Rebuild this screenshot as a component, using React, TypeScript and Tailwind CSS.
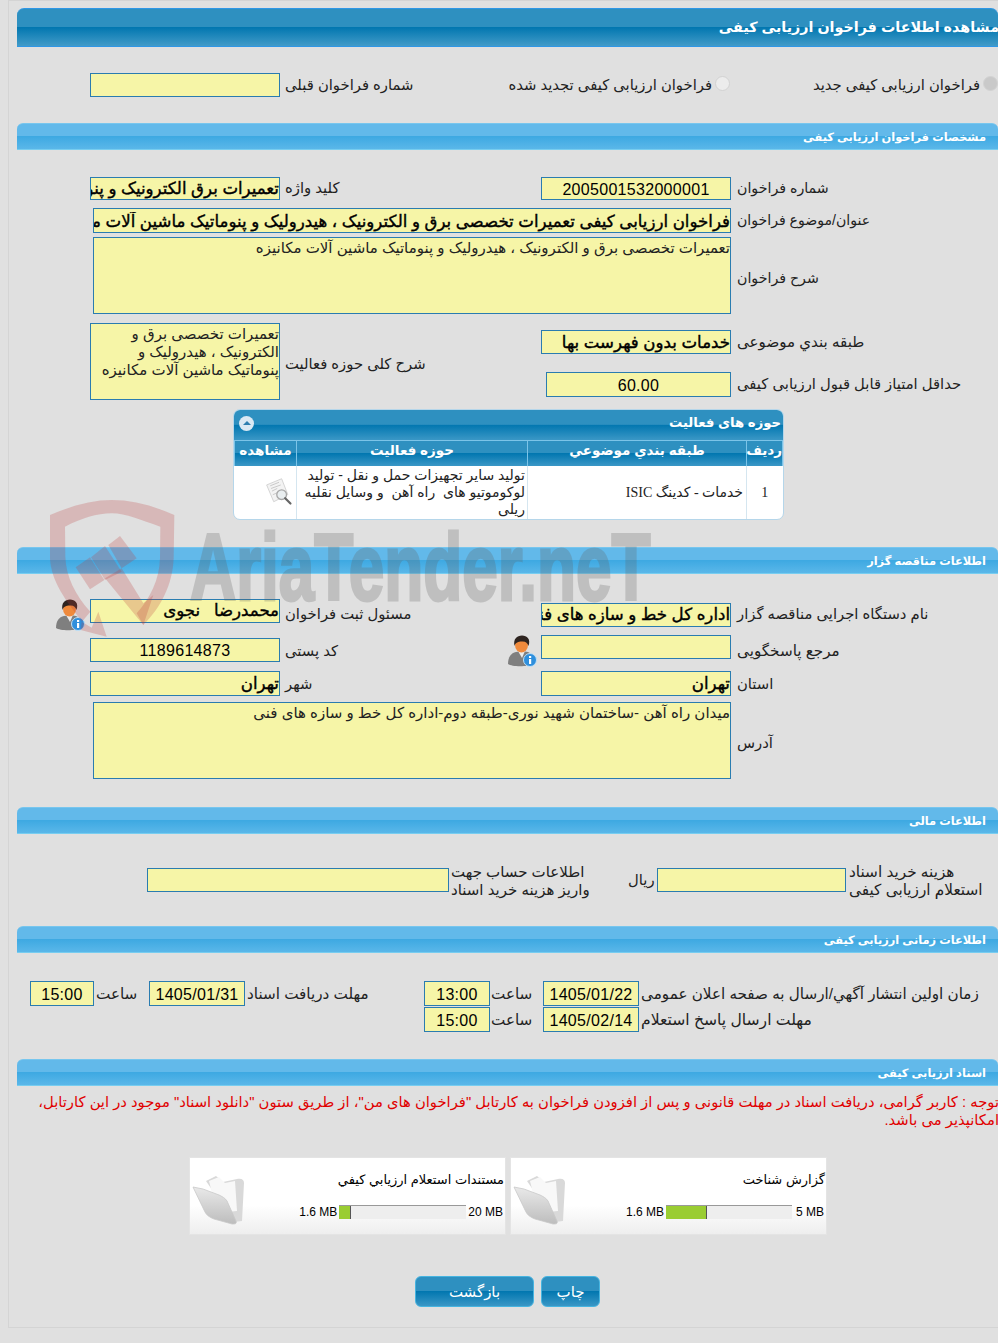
import React from 'react';

const font = "[font-family:'Liberation_Sans','DejaVu_Sans',sans-serif]";
const darkBar = 'bg-[linear-gradient(#2e90c0_0,#2e90c0_48%,#0277b0_50%,#3a97c6_100%)]';

const Section = ({ title }: { title: string }) => (
  <div dir="rtl" className="h-[27px] rounded-t-[6px] border-y border-t-[#77c6ee] border-b-[#77cdf0] bg-[linear-gradient(#62b9ea_0,#62b9ea_48%,#3ea9e2_50%,#5ab7e9_100%)] pr-[12px] text-[11.400px] font-bold leading-[26px] text-white">
    {title}
  </div>
);

const Field = ({ value = '', className = '', center = false, bold = false }: { value?: string; className?: string; center?: boolean; bold?: boolean }) => (
  <input
    readOnly
    dir="rtl"
    value={value}
    className={`block border border-[#2a7cb0] bg-[#f6f5a7] px-0 text-black outline-none ${center ? 'pt-[3px] text-center text-[16px] tracking-[0.3px]' : 'text-right'} ${bold ? 'pt-[2px] text-[16.600px] [-webkit-text-stroke:0.4px_black]' : ''} ${className}`}
  />
);

const Area = ({ value, className = '' }: { value: string; className?: string }) => (
  <textarea
    readOnly
    dir="rtl"
    value={value}
    className={`block resize-none overflow-hidden border border-[#2a7cb0] bg-[#f6f5a7] pt-[1px] text-[15px] leading-[18px] text-[#222] outline-none ${className}`}
  />
);

const Label = ({ children, className = '', size = 'text-[14.800px]' }: { children: React.ReactNode; className?: string; size?: string }) => (
  <div dir="rtl" className={`whitespace-nowrap text-left text-[#222] ${size} ${className}`}>
    {children}
  </div>
);

const Radio = ({ checked = false }: { checked?: boolean }) => (
  <span className={`-mt-[5px] block h-[15px] w-[15px] rounded-full border border-[#d2d2d2] ${checked ? 'bg-[#c9c9c9]' : 'bg-[#ececec]'}`} />
);

const PersonIcon = ({ className = '' }: { className?: string }) => (
  <svg viewBox="0 0 30 32" className={className}>
    <path d="M1 29c0-7 3-11 8-12l6-1 6 1c3 1 4 3 4 6v6c-4 3-20 3-24 0z" fill="#7f7f7f" />
    <path d="M11 16l4 7 3-7-3-2z" fill="#ececec" />
    <ellipse cx="14.500" cy="10" rx="6.500" ry="7.500" fill="#f08a3c" />
    <path d="M7.500 11C6 4 10 0.500 15 0.500s9 3.500 6.500 10.500c-1-3-3-5-7-4.500-3 0-6 1-7 4.500z" fill="#2e2420" />
    <circle cx="23" cy="25" r="6.500" fill="#2f8fdc" stroke="#bfe0f7" strokeWidth="1" />
    <rect x="22" y="24" width="2.200" height="5" fill="#fff" />
    <rect x="22" y="21" width="2.200" height="2" fill="#fff" />
  </svg>
);

const ViewIcon = () => (
  <svg viewBox="0 0 32 34" className="h-[30px] w-[30px]">
    <path d="M2 9l17-7 7 18-16 8z" fill="#f3f3f3" stroke="#cfcfcf" />
    <path d="M6 10l10-4M7 13l11-4M8 16l6-3M9 20l5-2" stroke="#c4c4c4" />
    <circle cx="19" cy="20" r="5.500" fill="#e9eef0" stroke="#a8a8a8" strokeWidth="1.500" />
    <path d="M23 24l6 6" stroke="#666" strokeWidth="2.500" strokeLinecap="round" />
  </svg>
);

const FolderIcon = () => (
  <svg viewBox="0 0 56 52" className="h-[52px] w-[56px] shrink-0">
    <defs>
      <linearGradient id="folderFront" x1="0" y1="0" x2="0" y2="1">
        <stop offset="0" stopColor="#e9e9e9" />
        <stop offset="1" stopColor="#bdbdbd" />
      </linearGradient>
    </defs>
    <path d="M14 8l10-5 7 6 14-3c5-1 7 1 7 4l-2 38-8 1z" fill="#d9d9d9" />
    <path d="M17 8l10-4 6 6 10-2 2 30-20 2z" fill="#f8f8f8" />
    <path d="M1 14l10 2 16 6c4 2 6 3 8 6l9 20c1 3-1 3-4 3L22 46c-5-2-8-4-10-9z" fill="url(#folderFront)" stroke="#c9c9c9" strokeWidth="0.800" />
  </svg>
);

const FileCard = ({ title, total, used, barWidth, fill, totalGap }: { title: string; total: string; used: string; barWidth: string; fill: string; totalGap: string }) => (
  <div className="flex h-[78px] w-[317px] border border-[#e4e4e4] bg-[linear-gradient(#ffffff_0,#ffffff_62%,#eeeeee_100%)]">
    <div className="mt-[15px] ml-[2px]">
      <FolderIcon />
    </div>
    <div className="flex flex-1 flex-col items-end pr-[1px]">
      <div dir="rtl" className="mt-[14px] text-[13px] leading-[16px] text-black">{title}</div>
      <div className="mt-[17px] flex items-center text-[12px] leading-[14px] text-black">
        <span className="mr-[2px]">{used}</span>
        <div className={`h-[14px] border-t border-[#999] bg-[#eeeeee] ${barWidth}`}>
          <div className={`h-[13px] border-r border-[#555] bg-[#9acd32] ${fill}`} />
        </div>
        <span className={`mr-[1px] ${totalGap}`}>{total}</span>
      </div>
    </div>
  </div>
);

const Watermark = () => (
  <div className="pointer-events-none absolute left-0 top-0 z-10 h-[660px] w-[700px]">
    <svg viewBox="0 0 450 450" className="absolute left-[40px] top-[495px] h-[150px] w-[150px]">
      <g fill="rgba(190,60,60,0.24)">
        <path d="M30 60C100 30 160 15 215 15c60 0 120 15 188 45l-2 130c-3 80-40 150-91 200l-20-35c40-45 68-100 70-165l1-95C300 75 260 55 215 55c-45 0-90 15-140 40l1 90c2 60 30 115 75 165l-25 30C80 320 33 260 30 190z" />
        <path d="M195 250l50-30 65 105 30-25-30 90z" />
        <path d="M107 217l43-30 43 68-43 28z" />
        <path d="M153 187l42-34 50 77-50 25z" />
        <path d="M205 150l35-27 50 67-45 30z" />
        <path d="M125 380l30 18 20-48 25 75-78-20z" />
      </g>
    </svg>
    <div className="absolute left-[190px] top-[513px] origin-left whitespace-nowrap text-[94px] font-bold leading-[110px] text-[#606060] opacity-25 [-webkit-text-stroke:3px_#606060] [font-family:'Liberation_Sans',sans-serif] [transform:scaleX(0.68)]">
      AriaTender.neT
    </div>
  </div>
);

export default function App() {
  return (
    <div className={`relative h-[1343px] w-[998px] overflow-hidden bg-[#e0e0e0] ${font}`}>
      <div className="ml-[8px] h-[1328px] border-b border-l border-t border-[#d4d4d4] pl-[8px] pt-[7px]">
        {/* main title */}
        <div dir="rtl" className="h-[39px] overflow-hidden rounded-t-[7px] border-y border-[#2f97e6] bg-[linear-gradient(#2e90c0_0,#2e90c0_48%,#0277b0_50%,#429bc8_100%)] text-[14.300px] font-bold leading-[37px] text-white">
          <span className="mr-[-1px] inline-block">مشاهده اطلاعات فراخوان ارزیابی کیفی</span>
        </div>

        <div className="mt-[26px] grid h-[24px] grid-cols-[263px_450px_1fr] items-center">
          <Field className="ml-[73px] h-[24px] w-[190px]" />
          <div className="flex items-center justify-between pl-[5px] pt-[1px]">
            <Label>شماره فراخوان قبلی</Label>
            <div className="flex items-center gap-[3px]">
              <Label>فراخوان ارزیابی کیفی تجدید شده</Label>
              <Radio />
            </div>
          </div>
          <div className="flex items-center justify-end gap-[3px] pt-[1px]">
            <Label>فراخوان ارزیابی کیفی جدید</Label>
            <Radio checked />
          </div>
        </div>

        <div className="mt-[26px]"><Section title="مشخصات فراخوان ارزیابی کیفی" /></div>

        <div className="mt-[27px] grid h-[23px] grid-cols-[263px_261px_190px_1fr] items-center">
          <Field value="تعمیرات برق الکترونیک و پنوماتیک" bold className="ml-[73px] h-[23px] w-[190px]" />
          <Label className="pl-[5px]">کلید واژه</Label>
          <Field value="2005001532000001" center className="h-[23px] w-[190px]" />
          <Label className="pl-[6px]" size="text-[14.200px]">شماره فراخوان</Label>
        </div>

        <div className="mt-[8px] grid h-[25px] grid-cols-[714px_1fr] items-center">
          <Field value="فراخوان ارزیابی کیفی تعمیرات تخصصی برق و الکترونیک ، هیدرولیک و پنوماتیک ماشین آلات مکانیزه" bold className="ml-[76px] h-[25px] w-[638px]" />
          <Label className="pl-[6px]" size="text-[14.100px]">عنوان/موضوع فراخوان</Label>
        </div>

        <div className="mt-[4px] grid h-[77px] grid-cols-[714px_1fr] items-center">
          <Area value="تعمیرات تخصصی برق و الکترونیک ، هیدرولیک و پنوماتیک ماشین آلات مکانیزه" className="ml-[76px] h-[77px] w-[638px]" />
          <Label className="pl-[6px] pt-[6px]" size="text-[14.200px]">شرح فراخوان</Label>
        </div>

        <div className="mt-[9px] flex h-[77px]">
          <div className="flex w-[524px] items-center">
            <Area value="تعمیرات تخصصی برق و الکترونیک ، هیدرولیک و پنوماتیک ماشین آلات مکانیزه" className="ml-[73px] h-[77px] w-[190px]" />
            <Label className="pl-[5px] pt-[6px]">شرح کلی حوزه فعالیت</Label>
          </div>
          <div className="flex-1">
            <div className="mt-[7px] flex h-[24px] items-center">
              <Field value="خدمات بدون فهرست بها" bold className="h-[24px] w-[190px]" />
              <Label className="pl-[6px]" size="text-[15.100px]">طبقه بندي موضوعی</Label>
            </div>
            <div className="mt-[18px] flex h-[25px] items-center">
              <Field value="60.00" center className="ml-[5px] h-[25px] w-[185px]" />
              <Label className="pl-[6px]">حداقل امتیاز قابل قبول ارزیابی کیفی</Label>
            </div>
          </div>
        </div>

        {/* activity table */}
        <div className="ml-[216px] mt-[9px] w-[551px] overflow-hidden rounded-[7px] border border-[#b5d6ea] bg-white">
          <div dir="rtl" className={`flex h-[30px] items-center justify-between pb-[4px] pl-[5px] pr-[2px] text-[13.200px] font-bold text-white ${darkBar}`}>
            <span>حوزه های فعالیت</span>
            <span className="flex h-[15px] w-[15px] items-center justify-center rounded-full bg-[#dbe9f3]">
              <span className="h-0 w-0 border-x-[4px] border-b-[4px] border-x-transparent border-b-[#2e7fb0]" />
            </span>
          </div>
          <table dir="rtl" className="w-full table-fixed border-collapse">
            <colgroup>
              <col className="w-[36px]" />
              <col className="w-[219px]" />
              <col className="w-[231px]" />
              <col />
            </colgroup>
            <thead>
              <tr className={`h-[25px] text-[13.500px] font-bold text-white ${darkBar}`}>
                <th className="border-x border-t border-[#7cc4e8] p-0 pb-[4px] font-bold">ردیف</th>
                <th className="border-x border-t border-[#7cc4e8] p-0 pb-[4px] font-bold">طبقه بندي موضوعي</th>
                <th className="border-x border-t border-[#7cc4e8] p-0 pb-[4px] font-bold">حوزه فعالیت</th>
                <th className="border-x border-t border-[#7cc4e8] p-0 pb-[4px] font-bold">مشاهده</th>
              </tr>
            </thead>
            <tbody>
              <tr className="h-[53px] text-[#222]">
                <td className="border-l border-[#d5e6f0] p-0 text-center text-[14px] [font-family:'Liberation_Serif',serif]">1</td>
                <td className="border-l border-[#d5e6f0] py-0 pl-0 pr-[3px] text-right text-[14px] [font-family:'Liberation_Serif','DejaVu_Sans',serif]">خدمات - کدینگ ISIC</td>
                <td className="border-l border-[#d5e6f0] py-0 pl-0 pr-[2px] text-right text-[14px] leading-[17px]">
                  تولید سایر تجهیزات حمل و نقل - تولید<br />لوکوموتیو های &nbsp;راه آهن &nbsp;و وسایل نقلیه<br />ریلی
                </td>
                <td className="p-0">
                  <div className="flex justify-start pr-[2px]"><ViewIcon /></div>
                </td>
              </tr>
            </tbody>
          </table>
        </div>

        <div className="mt-[27px]"><Section title="اطلاعات مناقصه گزار" /></div>

        <div className="mt-[25px] grid h-[28px] grid-cols-[263px_261px_190px_1fr]">
          <div className="flex items-start">
            <PersonIcon className="ml-[38px] mr-[5px] h-[32px] w-[30px]" />
            <Field value="محمدرضا   نجوی" bold className="h-[24px] w-[190px]" />
          </div>
          <Label className="pl-[5px] leading-[30px]">مسئول ثبت فراخوان</Label>
          <Field value="اداره کل خط و سازه های فنی" bold className="mt-[4px] h-[24px] w-[190px]" />
          <Label className="pl-[6px] leading-[30px]">نام دستگاه اجرایی مناقصه گزار</Label>
        </div>

        <div className="mt-[8px] grid h-[28px] grid-cols-[263px_261px_190px_1fr]">
          <Field value="1189614873" center className="ml-[73px] mt-[3px] h-[24px] w-[190px]" />
          <div className="flex items-start justify-between">
            <Label className="pl-[5px] leading-[32px]">کد پستی</Label>
            <PersonIcon className="mr-[4px] h-[32px] w-[30px]" />
          </div>
          <Field className="h-[24px] w-[190px]" />
          <Label className="pl-[6px] leading-[32px]" size="text-[15.200px]">مرجع پاسخگویی</Label>
        </div>

        <div className="mt-[8px] grid h-[25px] grid-cols-[263px_261px_190px_1fr] items-center">
          <Field value="تهران" bold className="ml-[73px] h-[25px] w-[190px]" />
          <Label className="pl-[5px] pt-[2px]">شهر</Label>
          <Field value="تهران" bold className="h-[25px] w-[190px]" />
          <Label className="pl-[6px] pt-[2px]">استان</Label>
        </div>

        <div className="mt-[6px] grid h-[77px] grid-cols-[714px_1fr] items-center">
          <Area value="میدان راه آهن -ساختمان شهید نوری-طبقه دوم-اداره کل خط و سازه های فنی" className="ml-[76px] h-[77px] w-[638px]" />
          <Label className="pl-[6px] pt-[6px]">آدرس</Label>
        </div>

        <div className="mt-[28px]"><Section title="اطلاعات مالی" /></div>

        <div className="mt-[34px] flex h-[24px] items-center">
          <Field className="ml-[130px] h-[24px] w-[302px]" />
          <Label className="w-[179px] pl-[2px] pt-[2px] leading-[18px]" size="text-[15px]">اطلاعات حساب جهت<br />واریز هزینه خرید اسناد</Label>
          <Label className="w-[29px] pt-[2px]">ریال</Label>
          <Field className="h-[24px] w-[189px]" />
          <Label className="pl-[3px] pt-[2px] leading-[18px]" size="text-[15.300px]">هزینه خرید اسناد<br />استعلام ارزیابی کیفی</Label>
        </div>

        <div className="mt-[34px]"><Section title="اطلاعات زمانی ارزیابی کیفی" /></div>

        <div className="mt-[28px] flex h-[25px] items-center">
          <Field value="15:00" center className="ml-[13px] h-[25px] w-[64px]" />
          <Label className="w-[55px] pl-[2px] pt-[2px]" size="text-[15.200px]">ساعت</Label>
          <Field value="1405/01/31" center className="h-[25px] w-[96px]" />
          <Label className="w-[179px] pl-[2px] pt-[2px]" size="text-[15.200px]">مهلت دریافت اسناد</Label>
          <Field value="13:00" center className="h-[25px] w-[66px]" />
          <Label className="w-[53px] pl-[1px] pt-[2px]" size="text-[15.200px]">ساعت</Label>
          <Field value="1405/01/22" center className="h-[25px] w-[96px]" />
          <Label className="pl-[2px] pt-[2px]" size="text-[15.200px]">زمان اولین انتشار آگهي/ارسال به صفحه اعلان عمومی</Label>
        </div>
        <div className="ml-[407px] mt-[1px] flex h-[25px] items-center">
          <Field value="15:00" center className="h-[25px] w-[66px]" />
          <Label className="w-[53px] pl-[1px] pt-[2px]" size="text-[15.200px]">ساعت</Label>
          <Field value="1405/02/14" center className="h-[25px] w-[96px]" />
          <Label className="pl-[2px] pt-[2px]" size="text-[15.600px]">مهلت ارسال پاسخ استعلام</Label>
        </div>

        <div className="mt-[27px]"><Section title="اسناد ارزیابی کیفی" /></div>

        <div dir="rtl" className="mt-[7px] w-[982px] whitespace-nowrap text-[14.770px] leading-[18px] text-[#e00000]">
          توجه : کاربر گرامی، دریافت اسناد در مهلت قانونی و پس از افزودن فراخوان به کارتابل &quot;فراخوان های من&quot;، از طریق ستون &quot;دانلود اسناد&quot; موجود در این کارتابل،<br />امکانپذیر می باشد.
        </div>

        <div className="ml-[172px] mt-[28px] flex gap-[4px]">
          <FileCard title="مستندات استعلام ارزيابي كيفي" used="1.6 MB" total="20 MB" barWidth="w-[127px]" fill="w-[12px]" totalGap="ml-[2px]" />
          <FileCard title="گزارش شناخت" used="1.6 MB" total="5 MB" barWidth="w-[126px]" fill="w-[41px]" totalGap="ml-[4px]" />
        </div>

        <div className="ml-[398px] mt-[41px] flex gap-[7px]">
          <button className={`h-[31px] w-[119px] rounded-[6px] border border-[#46b4e0] pt-[2px] text-[15px] text-white ${darkBar}`}>بازگشت</button>
          <button className={`h-[31px] w-[59px] rounded-[6px] border border-[#46b4e0] pt-[2px] text-[15px] text-white ${darkBar}`}>چاپ</button>
        </div>
      </div>
      <Watermark />
    </div>
  );
}
